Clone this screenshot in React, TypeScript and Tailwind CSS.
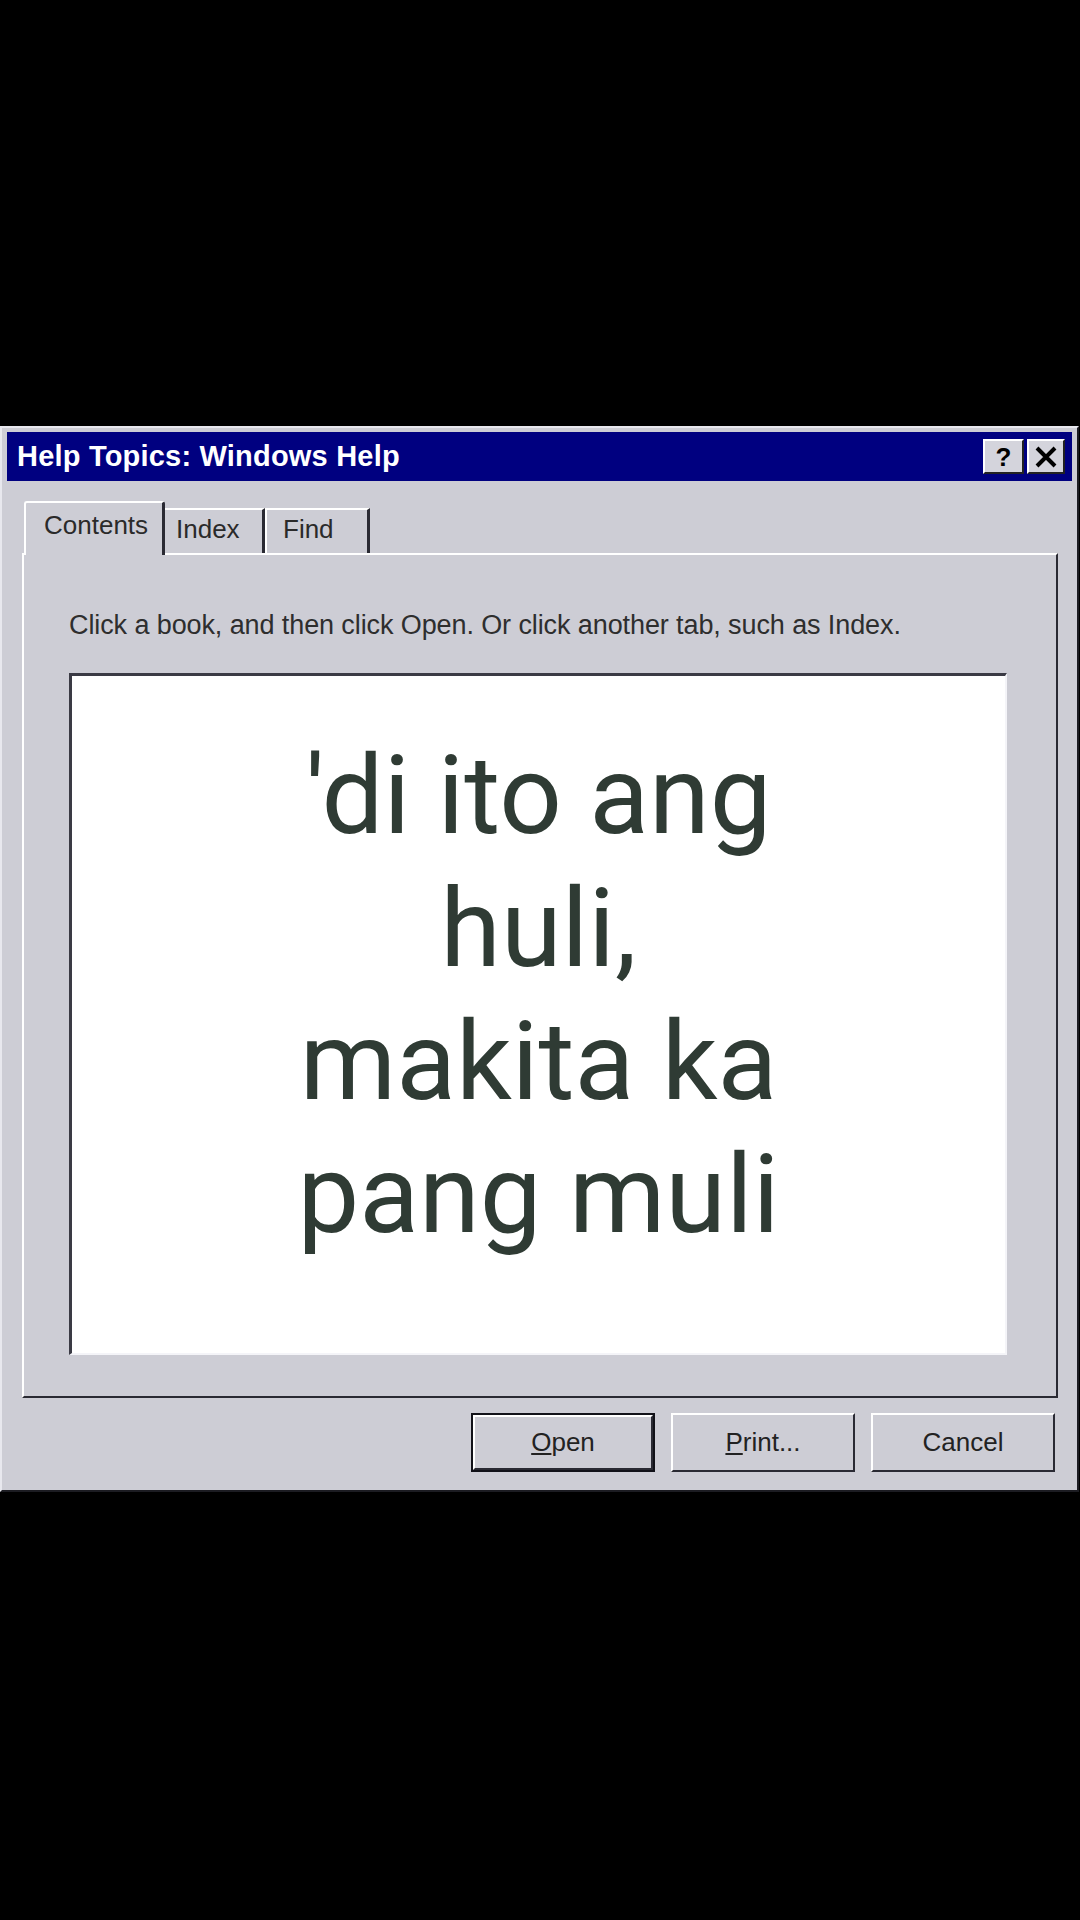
import React from "react";

const ui = { fontFamily: '"Liberation Sans", Arial, sans-serif' };
const big = { fontFamily: 'Roboto, "Noto Sans", sans-serif' };

const Btn: React.FC<{ label: React.ReactNode; primary?: boolean }> = ({ label, primary }) => (
  <div className={primary ? "border-2 border-[#111118]" : ""}>
    <div
      className={`flex items-center justify-center bg-[#cdcdd5] border-t-2 border-l-2 border-white border-r-2 border-b-2 border-r-[#2a2a33] border-b-[#2a2a33] text-[26px] text-[#222] ${
        primary ? "w-[180px] h-[55px]" : "w-[184px] h-[59px]"
      }`}
    >
      {label}
    </div>
  </div>
);

export default function App() {
  return (
    <div className="w-[1080px] h-[1920px] bg-black pt-[426px]" style={ui}>
      {/* dialog frame */}
      <div className="w-[1079px] h-[1066px] bg-[#cdcdd5] border-t-2 border-l-2 border-[#e8e8ee] border-r-2 border-b-2 border-r-[#1c1c22] border-b-[#1c1c22] flex flex-col">
        {/* caption */}
        <div className="mx-[5px] mt-[4px] h-[49px] bg-[#000080] flex items-center justify-between pl-[10px] pr-[7px]">
          <span className="text-white font-bold text-[29px] tracking-[0.2px]">Help Topics: Windows Help</span>
          <div className="flex gap-[3px]">
            <div className="w-[41px] h-[35px] bg-[#d4d4dc] border-t-2 border-l-2 border-white border-r-2 border-b-2 border-r-[#222] border-b-[#222] flex items-center justify-center text-[26px] font-bold text-black leading-none">
              ?
            </div>
            <div className="w-[38px] h-[35px] bg-[#d4d4dc] border-t-2 border-l-2 border-white border-r-2 border-b-2 border-r-[#222] border-b-[#222] flex items-center justify-center">
              <svg width="24" height="22" viewBox="0 0 24 22">
                <path d="M3 2 L21 20 M21 2 L3 20" stroke="#000" strokeWidth="4" />
              </svg>
            </div>
          </div>
        </div>

        {/* tabs */}
        <div className="flex items-end pl-[22px] mt-[20px] h-[52px] relative z-10">
          <div className="h-[54px] w-[141px] bg-[#cdcdd5] border-t-2 border-l-2 border-white border-r-[3px] border-r-[#2a2a33] rounded-t-[3px] pl-[18px] pt-[3px] text-[26px] text-[#2a2a2a] -mb-[2px]">
            Contents
          </div>
          <div className="h-[45px] w-[100px] border-t-2 border-white border-r-[3px] border-r-[#2a2a33] pl-[11px] pt-0 text-[26px] text-[#2a2a2a]">
            Index
          </div>
          <div className="h-[45px] w-[105px] border-t-2 border-l-2 border-white border-r-[3px] border-r-[#2a2a33] pl-[16px] pt-0 text-[26px] text-[#2a2a2a]">
            Find
          </div>
        </div>

        {/* panel */}
        <div className="ml-[20px] w-[1036px] h-[845px] border-t-2 border-l-2 border-white border-r-2 border-b-2 border-r-[#2a2a33] border-b-[#2a2a33] flex flex-col pl-[45px]">
          <p className="mt-[55px] text-[27px] text-[#2e2e2e] leading-[30px] tracking-[-0.1px]">
            Click a book, and then click Open. Or click another tab, such as Index.
          </p>
          <div className="mt-[33px] w-[938px] h-[682px] bg-white border-t-[3px] border-l-[3px] border-[#3a3a44] border-r-2 border-b-2 border-r-[#f4f4f8] border-b-[#f4f4f8] flex flex-col items-center pt-[53px]">
            <div className="text-[110px] leading-[133px] text-[#2f3b34] text-center" style={big}>
              <div>'di ito ang</div>
              <div>huli,</div>
              <div>makita ka</div>
              <div>pang muli</div>
            </div>
          </div>
        </div>

        {/* buttons */}
        <div className="flex justify-end gap-[16px] mt-[15px] pr-[22px]">
          <Btn primary label={<span><span className="underline">O</span>pen</span>} />
          <Btn label={<span><span className="underline">P</span>rint...</span>} />
          <Btn label="Cancel" />
        </div>
      </div>
    </div>
  );
}
